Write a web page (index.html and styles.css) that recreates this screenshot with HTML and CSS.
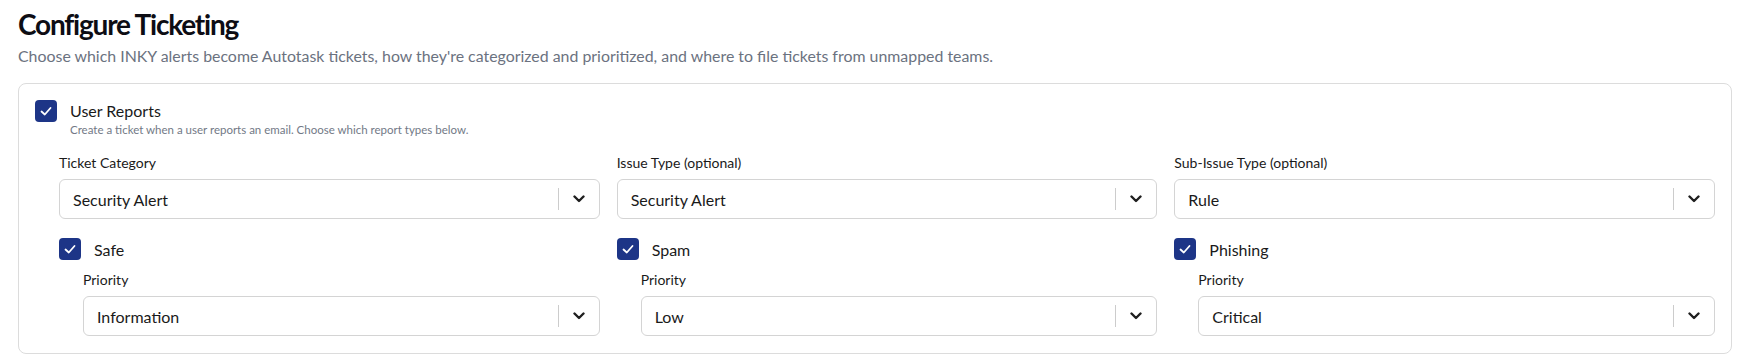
FILE: index.html
```html
<!DOCTYPE html>
<html lang="en">
<head>
  <meta charset="UTF-8">
  <meta name="viewport" content="width=device-width, initial-scale=1.0">
  <title>Configure Ticketing</title>
  <link rel="stylesheet" href="styles.css">
</head>
<body>
  <div class="page">
    <h1 class="title">Configure Ticketing</h1>
    <p class="subtitle">Choose which INKY alerts become Autotask tickets, how they're categorized and prioritized, and where to file tickets from unmapped teams.</p>

    <div class="card">
      <div class="toggle">
        <span class="check"><svg viewBox="0 0 22 22"><polyline points="6.5,11.5 9.8,14.5 15.5,8" /></svg></span>
        <div>
          <div class="toggle-title">User Reports</div>
          <div class="toggle-desc">Create a ticket when a user reports an email. Choose which report types below.</div>
        </div>
      </div>

      <div class="grid">
        <!-- column 1 -->
        <div class="col">
          <div class="field">
            <div class="label">Ticket Category</div>
            <div class="select"><span class="value">Security Alert</span><span class="sep"></span><span class="arrow"><svg viewBox="0 0 12 8"><polyline points="1.5,1.5 6,6 10.5,1.5" /></svg></span></div>
          </div>
          <div class="option">
            <span class="check"><svg viewBox="0 0 22 22"><polyline points="6.5,11.5 9.8,14.5 15.5,8" /></svg></span>
            <span class="option-name">Safe</span>
          </div>
          <div class="field nested">
            <div class="label">Priority</div>
            <div class="select"><span class="value">Information</span><span class="sep"></span><span class="arrow"><svg viewBox="0 0 12 8"><polyline points="1.5,1.5 6,6 10.5,1.5" /></svg></span></div>
          </div>
        </div>

        <!-- column 2 -->
        <div class="col">
          <div class="field">
            <div class="label">Issue Type (optional)</div>
            <div class="select"><span class="value">Security Alert</span><span class="sep"></span><span class="arrow"><svg viewBox="0 0 12 8"><polyline points="1.5,1.5 6,6 10.5,1.5" /></svg></span></div>
          </div>
          <div class="option">
            <span class="check"><svg viewBox="0 0 22 22"><polyline points="6.5,11.5 9.8,14.5 15.5,8" /></svg></span>
            <span class="option-name">Spam</span>
          </div>
          <div class="field nested">
            <div class="label">Priority</div>
            <div class="select"><span class="value">Low</span><span class="sep"></span><span class="arrow"><svg viewBox="0 0 12 8"><polyline points="1.5,1.5 6,6 10.5,1.5" /></svg></span></div>
          </div>
        </div>

        <!-- column 3 -->
        <div class="col">
          <div class="field">
            <div class="label">Sub-Issue Type (optional)</div>
            <div class="select"><span class="value">Rule</span><span class="sep"></span><span class="arrow"><svg viewBox="0 0 12 8"><polyline points="1.5,1.5 6,6 10.5,1.5" /></svg></span></div>
          </div>
          <div class="option">
            <span class="check"><svg viewBox="0 0 22 22"><polyline points="6.5,11.5 9.8,14.5 15.5,8" /></svg></span>
            <span class="option-name">Phishing</span>
          </div>
          <div class="field nested">
            <div class="label">Priority</div>
            <div class="select"><span class="value">Critical</span><span class="sep"></span><span class="arrow"><svg viewBox="0 0 12 8"><polyline points="1.5,1.5 6,6 10.5,1.5" /></svg></span></div>
          </div>
        </div>
      </div>
    </div>
  </div>
</body>
</html>
```

FILE: styles.css
```css
html, body {margin: 0; background: #fff}
body {
  font-family: Lato, "Noto Sans", sans-serif;
  color: #1a1a1a;
}

.page {
  padding: 7px 13px 0 18px;
}

.title {
  margin: 0;
  font-size: 28px;
  line-height: 34px;
  font-weight: 700;
  letter-spacing: -1.2px;
  color: #0d0d14;
}
.subtitle {
  margin: 3px 0 15px;
  font-size: 15.9px;
  line-height: 24px;
  color: #6b7280;
}

/* Card */
.card {
  border: 1px solid #dcdcdc;
  border-radius: 8px;
  padding: 16px 16px 17px;
}

.toggle {
  display: flex;
  gap: 13px;
  align-items: flex-start;
}
.toggle-title {
  font-size: 16px;
  line-height: 22px;
  color: #1a1a1a;
}
.toggle-desc {
  font-size: 11.5px;
  line-height: 16px;
  color: #727986;
}

.check {
  flex: none;
  width: 22px;
  height: 22px;
  border-radius: 4px;
  background: #1d3587;
  display: flex;
}
.check svg {
  width: 22px;
  height: 22px;
  fill: none;
  stroke: #fff;
  stroke-width: 1.8;
  stroke-linecap: round;
  stroke-linejoin: round;
}

.grid {
  margin: 15px 0 0 24px;
  display: grid;
  grid-template-columns: repeat(3, 1fr);
  column-gap: 17px;
}

.label {
  font-size: 14px;
  line-height: 20px;
  margin-bottom: 6px;
  color: #1a1a1a;
}

.select {
  height: 40px;
  box-sizing: border-box;
  border: 1px solid #d4d4d4;
  border-radius: 6px;
  display: flex;
  align-items: center;
  background: #fff;
}
.value {
  flex: 1;
  padding-left: 13px;
  font-size: 16px;
  color: #1a1a1a;
}
.sep {
  width: 1px;
  height: 22px;
  background: #cccccc;
}
.arrow {
  width: 40px;
  display: flex;
  justify-content: center;
}
.arrow svg {
  width: 12px;
  height: 8px;
  fill: none;
  stroke: #1f1f1f;
  stroke-width: 2.4;
  stroke-linecap: round;
  stroke-linejoin: round;
}

.option {
  margin-top: 19px;
  display: flex;
  align-items: center;
  gap: 13px;
}
.option-name {
  font-size: 16px;
}

.nested {
  margin: 10px 0 0 24px;
}
```
